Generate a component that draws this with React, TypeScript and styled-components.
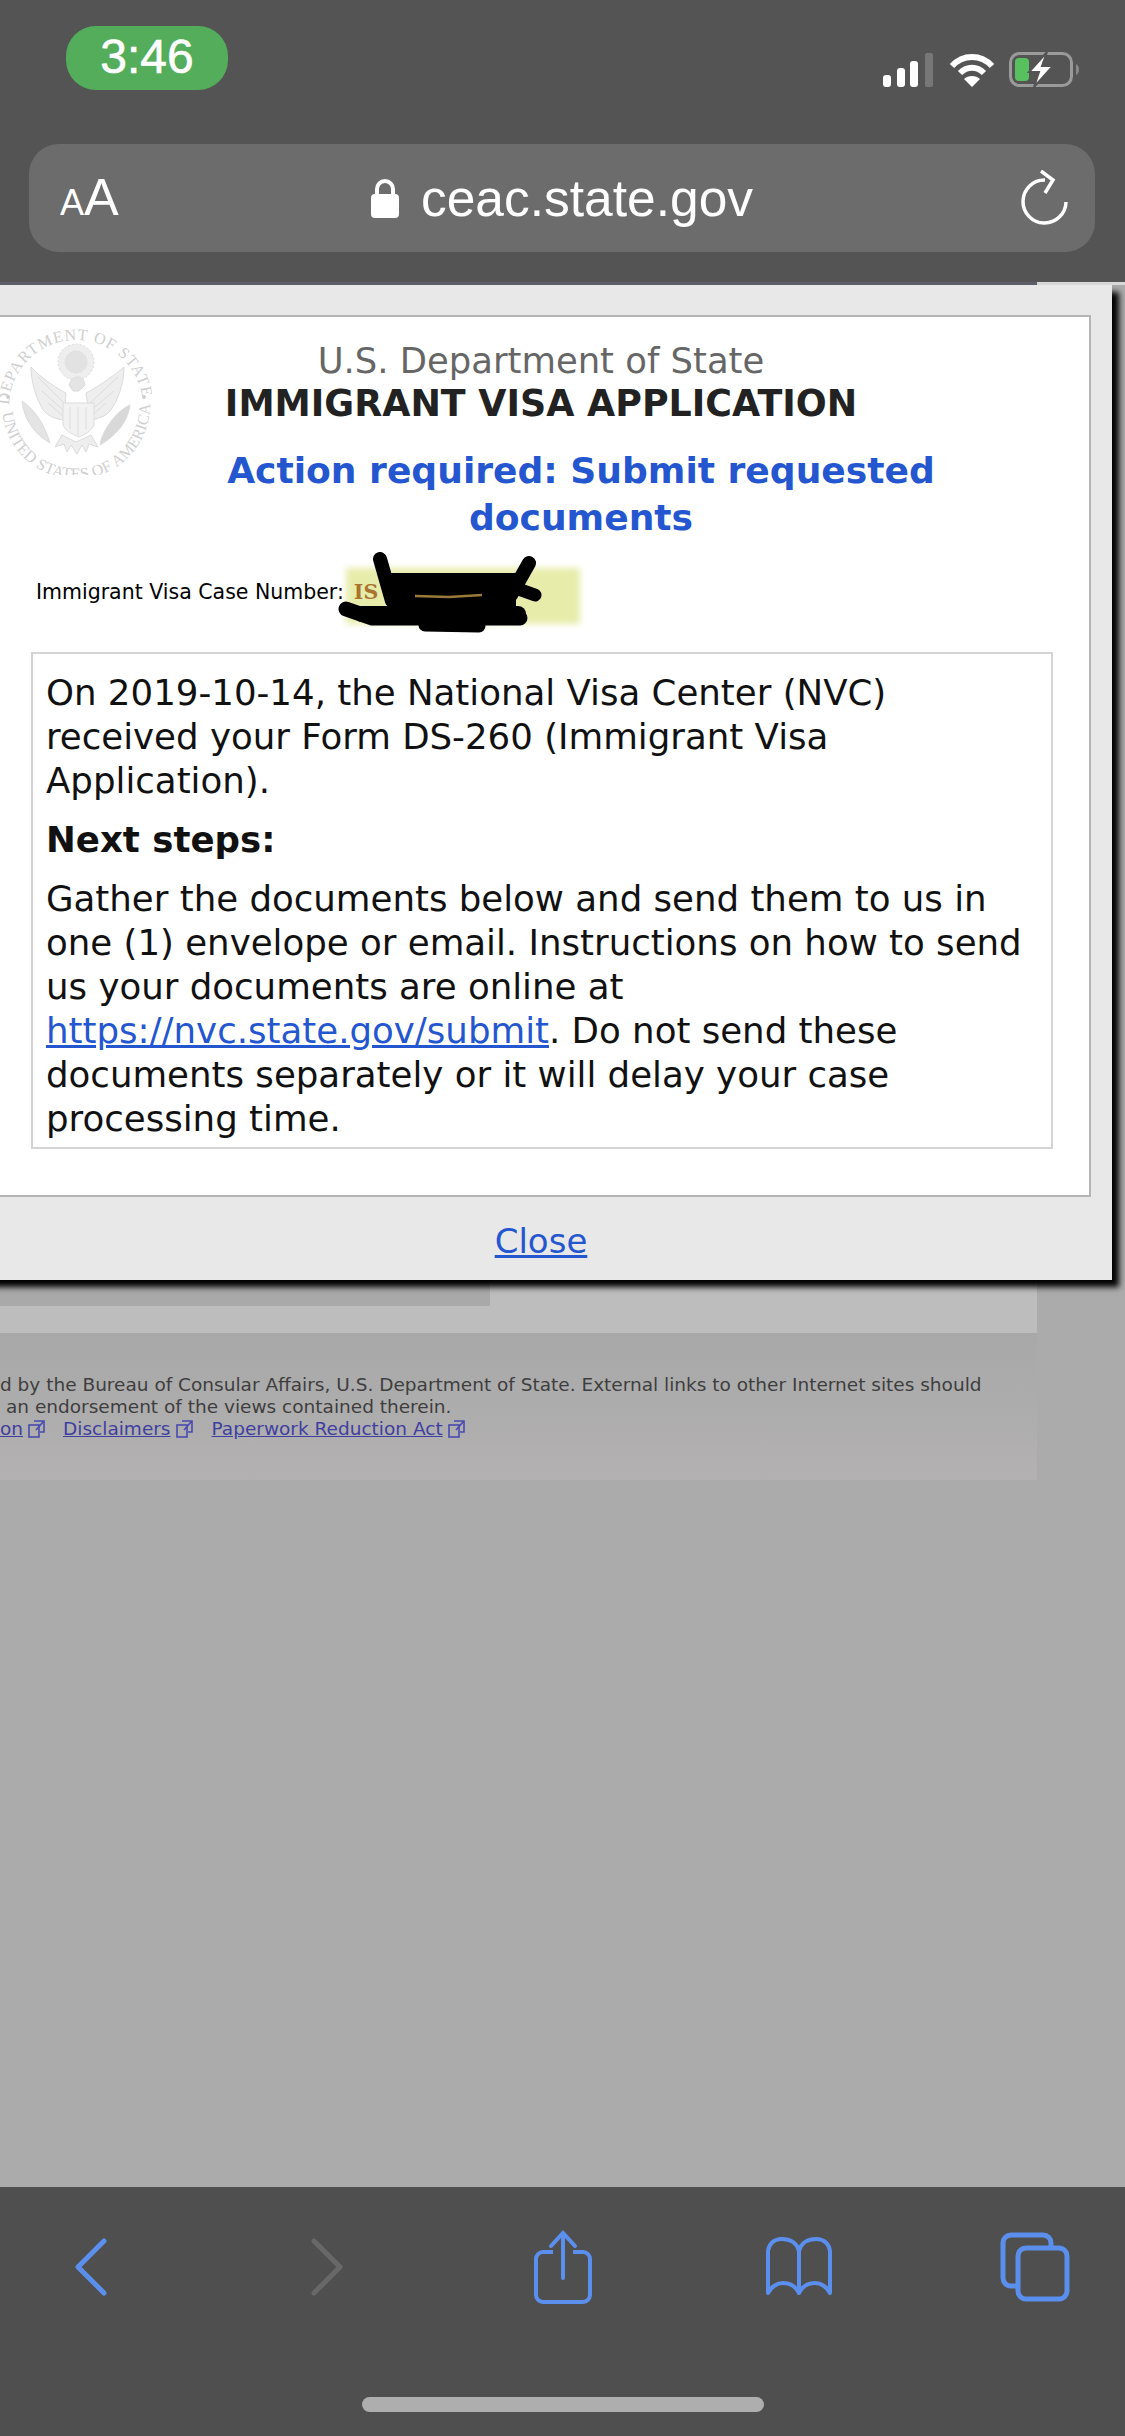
import React from 'react';
import styled, { createGlobalStyle } from 'styled-components';

const GlobalStyle = createGlobalStyle`
  html, body {
    margin: 0;
    padding: 0;
    background: #ababab;
  }
`;

const Screen = styled.div`
  width: 1125px;
  height: 2436px;
  display: flex;
  flex-direction: column;
  overflow: hidden;
  font-family: 'DejaVu Sans', Verdana, sans-serif;
`;

const TopChrome = styled.div`
  height: 282px;
  flex: none;
  background: #545454;
  box-sizing: border-box;
  padding: 26px 30px 0 29px;
`;

const StatusRow = styled.div`
  height: 118px;
  display: flex;
  justify-content: space-between;
  align-items: flex-start;
`;

const TimePill = styled.div`
  width: 162px;
  height: 64px;
  margin-left: 37px;
  border-radius: 30px;
  background: #54ad5a;
  color: #fff;
  font-family: 'Liberation Sans', Arial, sans-serif;
  font-size: 48px;
  line-height: 62px;
  text-align: center;
  -webkit-text-stroke: 0.6px #fff;
`;

const StatusIcons = styled.div`
  display: flex;
  align-items: center;
  gap: 14px;
  margin-top: 26px;
  margin-right: 16px;
`;

const AddressBar = styled.div`
  height: 108px;
  border-radius: 30px;
  background: #6c6c6c;
  display: grid;
  grid-template-columns: 100px 1fr 100px;
  align-items: center;
  color: #fff;
  font-family: 'Liberation Sans', Arial, sans-serif;
`;

const TextSize = styled.div`
  padding-left: 31px;
  font-size: 52px;
  line-height: 60px;
  padding-top: 4px;
  small {
    font-size: 36px;
  }
`;

const UrlRow = styled.div`
  display: flex;
  justify-content: center;
  align-items: center;
  gap: 22px;
  font-size: 51.5px;
`;

const Reload = styled.div`
  display: flex;
  justify-content: flex-end;
  padding-right: 26px;
`;

const PageArea = styled.div`
  position: relative;
  flex: 1;
  background: linear-gradient(#d8d8d8 3px, #ababab 3px);
`;

const PageBody = styled.div`
  width: 1037px;
  height: 1051px;
  box-sizing: border-box;
  border-top: 3px solid #5c5e6a;
  background: #bdbdbd;
`;

const BehindBlock = styled.div`
  width: 490px;
  height: 1021px;
  background: #a9a9a9;
`;

const Footer = styled.div`
  width: 1037px;
  height: 147px;
  box-sizing: border-box;
  padding-top: 41px;
  background: linear-gradient(#a8a8a8, #b3b1b1);
  color: #3e3e3e;
  font-size: 18.5px;
  line-height: 22px;
  white-space: nowrap;
`;

const FooterLine = styled.div<{ $indent: number }>`
  padding-left: ${(p) => p.$indent}px;
`;

const FooterLinks = styled.div`
  display: flex;
  align-items: center;
`;

const FooterLink = styled.a<{ $gap: number }>`
  display: flex;
  align-items: center;
  gap: 5px;
  color: #3f3fa0;
  margin-right: ${(p) => p.$gap}px;
  span {
    text-decoration: underline;
  }
`;

const Modal = styled.div`
  position: absolute;
  top: 3px;
  left: -30px;
  width: 1142px;
  box-sizing: border-box;
  padding: 30px 21px 0;
  background: #e8e8e8;
  box-shadow: 7px 7px 6px #000;
`;

const Panel = styled.div`
  height: 882px;
  box-sizing: border-box;
  position: relative;
  border: 2px solid #b4b4b4;
  background: #fff;
  padding-top: 22px;
`;

const SealWrap = styled.div`
  position: absolute;
  left: 7px;
  top: 6px;
`;

const Agency = styled.div`
  font-size: 35.4px;
  line-height: 43px;
  text-align: center;
  color: #666;
`;

const AppName = styled.div`
  font-size: 36.4px;
  line-height: 43px;
  text-align: center;
  color: #222;
  font-weight: bold;
`;

const ActionTitle = styled.h1`
  margin: 23px 0 0 80px;
  font-size: 36.1px;
  line-height: 47px;
  text-align: center;
  color: #2457cf;
  font-weight: bold;
`;

const CaseRow = styled.div`
  position: relative;
  margin: 35px 0 0 43px;
  height: 30px;
  display: flex;
  align-items: center;
  font-size: 20.5px;
  color: #000;
  white-space: nowrap;
`;

const CaseValue = styled.span`
  position: relative;
  margin-left: 10px;
  color: #a9742f;
  font-family: 'DejaVu Serif', serif;
  font-weight: bold;
  &:before {
    content: '';
    position: absolute;
    left: -8px;
    top: -12px;
    width: 234px;
    height: 56px;
    background: #e8ecaa;
    filter: blur(3px);
    z-index: 0;
  }
  b {
    position: relative;
  }
`;

const Scribble = styled.svg`
  position: absolute;
  left: 296px;
  top: -25px;
`;

const InfoBox = styled.div`
  margin: 45px 36px 0 38px;
  border: 2px solid #d4d4d4;
  padding: 17px 13px 6px;
  color: #111;
  font-size: 35.6px;
  line-height: 44px;
`;

const Para = styled.p`
  margin: 0 0 15px;
  &:last-child {
    margin: 0;
  }
  a {
    color: #2457cf;
  }
`;

const ModalFoot = styled.div`
  height: 83px;
  display: flex;
  align-items: center;
  justify-content: center;
  box-sizing: border-box;
  padding-top: 4px;
  a {
    color: #2457cf;
    font-size: 34px;
    text-decoration: underline;
  }
`;

const BottomBar = styled.div`
  position: relative;
  height: 249px;
  flex: none;
  background: #4f4f4f;
`;

const BarIcons = styled.div`
  display: grid;
  grid-template-columns: repeat(5, 236px);
  justify-content: center;
  justify-items: center;
  align-items: center;
  height: 160px;
`;

const HomeIndicator = styled.div`
  position: absolute;
  left: 362px;
  top: 210px;
  width: 402px;
  height: 15px;
  border-radius: 8px;
  background: #aeaeae;
`;

function ExternalIcon() {
  return (
    <svg width="17" height="18" viewBox="0 0 17 18" fill="none" stroke="#4a4ab0" strokeWidth="1.6">
      <rect x="1" y="5" width="10" height="12" />
      <path d="M6 1h10v11h-4M8 10l7-8" />
    </svg>
  );
}

function Seal() {
  return (
    <svg width="152" height="152" viewBox="0 0 152 152">
      <defs>
        <path id="sealTop" d="M9 84A63 63 0 1 1 143 84" />
        <path id="sealBottom" d="M2 82A74 74 0 0 0 150 82" />
      </defs>
      <g fill="#cfcfcf" fontFamily="'Liberation Serif', serif" fontSize="16">
        <text letterSpacing="1">
          <textPath href="#sealTop" startOffset="2">DEPARTMENT OF STATE</textPath>
        </text>
        <text letterSpacing="0.2">
          <textPath href="#sealBottom" startOffset="8">UNITED STATES OF AMERICA</textPath>
        </text>
        <circle cx="8" cy="74" r="2" />
        <circle cx="144" cy="74" r="2" />
      </g>
      <g fill="#eeeeee" stroke="#dcdcdc" strokeWidth="1">
        <circle cx="76" cy="39" r="18" strokeDasharray="2 2" />
        <circle cx="76" cy="39" r="11" fill="#e2e2e2" strokeDasharray="1.5 1.5" />
        <path d="M66 70c-8-4-24-14-35-26 0 16 6 34 13 44 4 5 12 8 20 9z" />
        <path d="M86 70c8-4 24-14 38-26 0 16-6 34-14 44-4 5-12 8-20 9z" />
        <path d="M38 54l26 26M42 68l22 20M48 80l16 14M118 54l-28 26M114 68l-24 20M106 80l-16 14" fill="none" />
        <path d="M69 62c2-6 5-8 9-8s6 3 7 8l-6 6h-6z" fill="#e4e4e4" />
        <path d="M63 80h31v20c0 7-9 11-15 14-7-3-16-7-16-14z" fill="#f2f2f2" />
        <path d="M70 84v22M78 84v28M86 84v22" fill="none" />
        <path d="M62 112l-7 12 9-3 3 8 4-7 6 9 5-9 4 7 3-8 9 3-7-12-15 7z" />
        <path d="M22 78c12 8 22 22 28 42-14-8-26-22-28-42z" fill="#e4e4e4" />
        <path d="M130 82c-2 14-10 28-30 40 2-14 16-34 30-40z" fill="#d8d8d8" />
      </g>
    </svg>
  );
}

function App() {
  return (
    <Screen>
      <GlobalStyle />
      <TopChrome>
        <StatusRow>
          <TimePill>3:46</TimePill>
          <StatusIcons>
            <svg width="52" height="34" viewBox="0 0 52 34">
              <rect x="0" y="22" width="8" height="12" rx="3" fill="#fff" />
              <rect x="14" y="15" width="8" height="19" rx="3" fill="#fff" />
              <rect x="27" y="8" width="8" height="26" rx="3" fill="#fff" />
              <rect x="42" y="0" width="8" height="34" rx="2" fill="#777" />
            </svg>
            <svg width="46" height="34" viewBox="0 0 46 34" fill="none" stroke="#fff" strokeWidth="6">
              <path d="M3 13C14 1 32 1 43 13" />
              <path d="M11 20c7-7 17-7 24 0" />
              <path d="M23 34l-8-8c4-4 12-4 16 0z" fill="#fff" stroke="none" />
            </svg>
            <svg width="70" height="35" viewBox="0 0 70 35">
              <rect x="1.5" y="1.5" width="61" height="32" rx="9" fill="none" stroke="#9a9a9a" strokeWidth="3" />
              <rect x="6" y="6" width="14" height="23" rx="4" fill="#58c05e" />
              <path d="M67 12c2 1 3 3 3 5.500s-1 4.500-3 5.500z" fill="#8a8a8a" />
              <path d="M38 0L20 20h10l-5 15 19-21H33z" fill="#fff" stroke="#545454" strokeWidth="2" />
            </svg>
          </StatusIcons>
        </StatusRow>
        <AddressBar>
          <TextSize>
            <small>A</small>A
          </TextSize>
          <UrlRow>
            <svg width="28" height="40" viewBox="0 0 28 40">
              <path d="M6 18v-7a8 8 0 0 1 16 0v7" fill="none" stroke="#fff" strokeWidth="4" />
              <rect x="0" y="16" width="28" height="24" rx="4" fill="#fff" />
            </svg>
            <span>ceac.state.gov</span>
          </UrlRow>
          <Reload>
            <svg width="48" height="56" viewBox="0 0 48 56" fill="none" stroke="#fff" strokeWidth="3.500">
              <path d="M24 10A21.500 21.500 0 1 0 45 32" />
              <path d="M20 1l12 9-8 13" />
            </svg>
          </Reload>
        </AddressBar>
      </TopChrome>

      <PageArea>
        <PageBody>
          <BehindBlock />
        </PageBody>
        <Footer>
          <FooterLine $indent={0}>d by the Bureau of Consular Affairs, U.S. Department of State. External links to other Internet sites should</FooterLine>
          <FooterLine $indent={6}>an endorsement of the views contained therein.</FooterLine>
          <FooterLinks>
            <FooterLink $gap={18}>
              <span>on</span>
              <ExternalIcon />
            </FooterLink>
            <FooterLink $gap={19}>
              <span>Disclaimers</span>
              <ExternalIcon />
            </FooterLink>
            <FooterLink $gap={0}>
              <span>Paperwork Reduction Act</span>
              <ExternalIcon />
            </FooterLink>
          </FooterLinks>
        </Footer>

        <Modal>
          <Panel>
            <SealWrap>
              <Seal />
            </SealWrap>
            <Agency>U.S. Department of State</Agency>
            <AppName>IMMIGRANT VISA APPLICATION</AppName>
            <ActionTitle>
              Action required: Submit requested
              <br />
              documents
            </ActionTitle>
            <CaseRow>
              Immigrant Visa Case Number:
              <CaseValue>
                <b>IS</b>
              </CaseValue>
              <Scribble width="220" height="90" viewBox="0 0 220 90" fill="none" stroke="#000" strokeLinecap="round" strokeWidth="14">
                <path d="M48 7l12 42" />
                <path d="M197 11l-18 32" />
                <path d="M58 23h124v38H58z" fill="#000" strokeWidth="4" />
                <path d="M178 34l25 9" strokeWidth="13" />
                <path d="M83 44l34 1 33-2" stroke="#9a7a3a" strokeWidth="2.500" strokeLinecap="butt" />
                <path d="M14 57l26 9h148" strokeWidth="15" />
                <path d="M30 62h156" strokeWidth="16" />
                <path d="M93 73l54 1" strokeWidth="13" />
              </Scribble>
            </CaseRow>
            <InfoBox>
              <Para>On 2019-10-14, the National Visa Center (NVC) received your Form DS-260 (Immigrant Visa Application).</Para>
              <Para>
                <b>Next steps:</b>
              </Para>
              <Para>
                Gather the documents below and send them to us in one (1) envelope or email. Instructions on how to send us your documents are online at{' '}
                <a href="#submit">https://nvc.state.gov/submit</a>. Do not send these documents separately or it will delay your case processing time.
              </Para>
            </InfoBox>
          </Panel>
          <ModalFoot>
            <a href="#close">Close</a>
          </ModalFoot>
        </Modal>
      </PageArea>

      <BottomBar>
        <BarIcons>
          <svg width="34" height="58" viewBox="0 0 34 58" fill="none" stroke="#5b8fee" strokeWidth="5" strokeLinecap="round" strokeLinejoin="round">
            <path d="M30 3L4 29l26 26" />
          </svg>
          <svg width="34" height="58" viewBox="0 0 34 58" fill="none" stroke="#686868" strokeWidth="5" strokeLinecap="round" strokeLinejoin="round">
            <path d="M4 3l26 26L4 55" />
          </svg>
          <svg width="60" height="74" viewBox="0 0 60 74" fill="none" stroke="#5b8fee" strokeWidth="4">
            <path d="M20 22H10a7 7 0 0 0-7 7v36a7 7 0 0 0 7 7h40a7 7 0 0 0 7-7V29a7 7 0 0 0-7-7H40" />
            <path d="M30 48V3M18 16L30 3l12 13" strokeLinecap="round" />
          </svg>
          <svg width="68" height="60" viewBox="0 0 68 60" fill="none" stroke="#5b8fee" strokeWidth="4">
            <path d="M34 14C32 6 25 2 17 2 8 2 3 8 3 16v40c3-6 9-10 15-10 7 0 13 4 16 10 3-6 9-10 16-10 6 0 12 4 15 10V16c0-8-5-14-14-14-8 0-15 4-17 12z" strokeLinejoin="round" />
            <path d="M34 14v42" />
          </svg>
          <svg width="70" height="70" viewBox="0 0 70 70" fill="none" stroke="#5b8fee" strokeWidth="5">
            <path d="M51 15v-4a8 8 0 0 0-8-8H11a8 8 0 0 0-8 8v35a8 8 0 0 0 8 8h6" />
            <rect x="18" y="16" width="49" height="51" rx="8" />
          </svg>
        </BarIcons>
        <HomeIndicator />
      </BottomBar>
    </Screen>
  );
}

export default App;
